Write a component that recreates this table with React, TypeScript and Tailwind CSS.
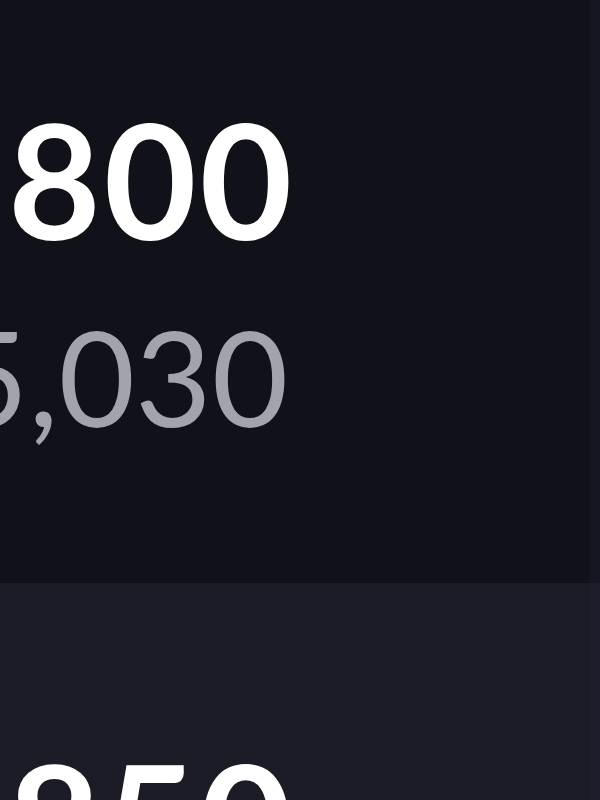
export default function App() {
  return (
    <div
      className="w-[600px] h-[800px] overflow-hidden bg-[#111219] flex"
      style={{ fontFamily: 'Lato, Inter, "Liberation Sans", sans-serif' }}
    >
      <div className="flex-1 flex flex-col min-w-0">
        {/* Stat block */}
        <div className="h-[583px] shrink-0 flex flex-col pt-[98px] pl-[8px]">
          <div className="text-[160px] leading-none font-bold text-white tracking-[3px]">800</div>
          <div className="mt-[52px] -ml-[56px] text-[132px] leading-none font-normal text-[#a3a3ad]">
            5,030
          </div>
        </div>

        {/* Next row */}
        <div className="flex-1 bg-[#1b1c26] pt-[156px] pl-[8px]">
          <div className="text-[160px] leading-none font-bold text-white tracking-[3px]">850</div>
        </div>
      </div>

      {/* Edge of next column */}
      <div className="w-[10px] shrink-0 flex flex-col">
        <div className="h-[583px] shrink-0 bg-[#141722]" />
        <div className="flex-1 bg-[#1c1f2b]" />
      </div>
    </div>
  )
}
